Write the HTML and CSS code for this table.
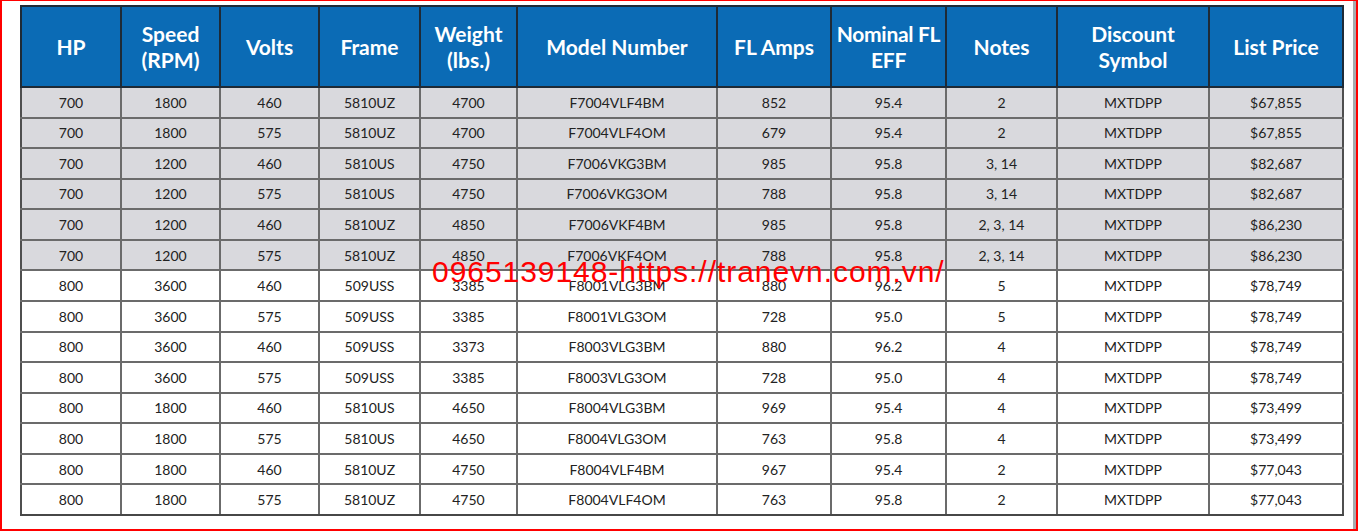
FILE: index.html
```html
<!DOCTYPE html>
<html>
<head>
<meta charset="utf-8">
<link rel="stylesheet" href="styles.css">
</head>
<body>
<div class="frame">
  <div class="content">
    <table class="price">
      <colgroup>
        <col class="c1"><col class="c2"><col class="c3"><col class="c4"><col class="c5"><col class="c6"><col class="c7"><col class="c8"><col class="c9"><col class="c10"><col class="c11">
      </colgroup>
      <thead>
        <tr>
          <th>HP</th><th>Speed<br>(RPM)</th><th>Volts</th><th>Frame</th><th>Weight<br>(lbs.)</th><th>Model Number</th><th>FL Amps</th><th class="tight">Nominal FL<br>EFF</th><th>Notes</th><th>Discount<br>Symbol</th><th>List Price</th>
        </tr>
      </thead>
      <tbody>
        <tr class="shade"><td>700</td><td>1800</td><td>460</td><td>5810UZ</td><td>4700</td><td>F7004VLF4BM</td><td>852</td><td>95.4</td><td>2</td><td>MXTDPP</td><td>$67,855</td></tr>
        <tr class="shade"><td>700</td><td>1800</td><td>575</td><td>5810UZ</td><td>4700</td><td>F7004VLF4OM</td><td>679</td><td>95.4</td><td>2</td><td>MXTDPP</td><td>$67,855</td></tr>
        <tr class="shade"><td>700</td><td>1200</td><td>460</td><td>5810US</td><td>4750</td><td>F7006VKG3BM</td><td>985</td><td>95.8</td><td>3, 14</td><td>MXTDPP</td><td>$82,687</td></tr>
        <tr class="shade"><td>700</td><td>1200</td><td>575</td><td>5810US</td><td>4750</td><td>F7006VKG3OM</td><td>788</td><td>95.8</td><td>3, 14</td><td>MXTDPP</td><td>$82,687</td></tr>
        <tr class="shade"><td>700</td><td>1200</td><td>460</td><td>5810UZ</td><td>4850</td><td>F7006VKF4BM</td><td>985</td><td>95.8</td><td>2, 3, 14</td><td>MXTDPP</td><td>$86,230</td></tr>
        <tr class="shade"><td>700</td><td>1200</td><td>575</td><td>5810UZ</td><td>4850</td><td>F7006VKF4OM</td><td>788</td><td>95.8</td><td>2, 3, 14</td><td>MXTDPP</td><td>$86,230</td></tr>
        <tr><td>800</td><td>3600</td><td>460</td><td>509USS</td><td>3385</td><td>F8001VLG3BM</td><td>880</td><td>96.2</td><td>5</td><td>MXTDPP</td><td>$78,749</td></tr>
        <tr><td>800</td><td>3600</td><td>575</td><td>509USS</td><td>3385</td><td>F8001VLG3OM</td><td>728</td><td>95.0</td><td>5</td><td>MXTDPP</td><td>$78,749</td></tr>
        <tr><td>800</td><td>3600</td><td>460</td><td>509USS</td><td>3373</td><td>F8003VLG3BM</td><td>880</td><td>96.2</td><td>4</td><td>MXTDPP</td><td>$78,749</td></tr>
        <tr><td>800</td><td>3600</td><td>575</td><td>509USS</td><td>3385</td><td>F8003VLG3OM</td><td>728</td><td>95.0</td><td>4</td><td>MXTDPP</td><td>$78,749</td></tr>
        <tr><td>800</td><td>1800</td><td>460</td><td>5810US</td><td>4650</td><td>F8004VLG3BM</td><td>969</td><td>95.4</td><td>4</td><td>MXTDPP</td><td>$73,499</td></tr>
        <tr><td>800</td><td>1800</td><td>575</td><td>5810US</td><td>4650</td><td>F8004VLG3OM</td><td>763</td><td>95.8</td><td>4</td><td>MXTDPP</td><td>$73,499</td></tr>
        <tr><td>800</td><td>1800</td><td>460</td><td>5810UZ</td><td>4750</td><td>F8004VLF4BM</td><td>967</td><td>95.4</td><td>2</td><td>MXTDPP</td><td>$77,043</td></tr>
        <tr><td>800</td><td>1800</td><td>575</td><td>5810UZ</td><td>4750</td><td>F8004VLF4OM</td><td>763</td><td>95.8</td><td>2</td><td>MXTDPP</td><td>$77,043</td></tr>
      </tbody>
    </table>
    <div class="watermark">0965139148-https://tranevn.com.vn/</div>
  </div>
  <div class="scrollbar"></div>
</div>
</body>
</html>
```

FILE: styles.css
```css
html, body {
  margin: 0;
  padding: 0;
  background: #ffffff;
}

.frame {
  width: 1358px;
  height: 531px;
  box-sizing: border-box;
  border: 2px solid #ff0000;
  border-top-width: 1px;
  display: flex;
}

.content {
  flex: 1;
  position: relative;
  padding: 4px 0 0 18px;
}

.scrollbar {
  width: 3px;
  background: #a7abae;
}

.price {
  border-collapse: collapse;
  table-layout: fixed;
  width: 1322px;
  font-family: Lato, "Noto Sans", sans-serif;
}

.c1 { width: 100px; }
.c2 { width: 99px; }
.c3 { width: 99px; }
.c4 { width: 101px; }
.c5 { width: 97px; }
.c6 { width: 200px; }
.c7 { width: 114px; }
.c8 { width: 115px; }
.c9 { width: 111px; }
.c10 { width: 152px; }
.c11 { width: 134px; }

.price th {
  height: 81px;
  box-sizing: border-box;
  padding: 0;
  background: #0b6bb5;
  color: #ffffff;
  font-size: 21px;
  font-weight: 700;
  line-height: 26px;
  border: 2px solid #1e2a36;
  text-align: center;
  vertical-align: middle;
}

.price th.tight {
  letter-spacing: -0.3px;
}

.price td {
  height: 30.57px;
  box-sizing: border-box;
  padding: 0;
  font-size: 14px;
  color: #222222;
  text-align: center;
  vertical-align: middle;
  border: 2px solid #6b6b6b;
}

.price tbody tr:last-child td {
  border-bottom-color: #474747;
}

.price td:first-child {
  border-left-color: #4f4f4f;
}

.price td:last-child {
  border-right-color: #4f4f4f;
}

.price tr.shade td {
  background: #d9d9dd;
}

.watermark {
  position: absolute;
  left: 430px;
  top: 256px;
  font-family: "Liberation Sans", Arial, sans-serif;
  font-size: 30px;
  line-height: 1;
  letter-spacing: 0.95px;
  color: #ff0000;
  white-space: nowrap;
}
```
